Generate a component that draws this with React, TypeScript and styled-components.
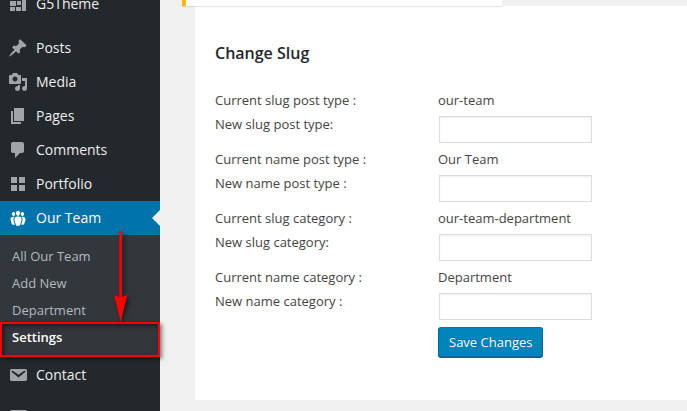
import React from "react";
import styled, { createGlobalStyle } from "styled-components";

const GlobalStyle = createGlobalStyle`
  * { box-sizing: border-box; }
  body {
    margin: 0;
    background: #f0f0f0;
    color: #444;
    font: 13px/24px "Open Sans", "Noto Sans", sans-serif;
  }
`;

const Page = styled.div`
  display: grid;
  grid-template-columns: 160px minmax(0, 1fr);
  height: 100vh;
  overflow: hidden;
`;

const Sidebar = styled.nav`
  background: #23282d;
  min-height: 0;
`;

const Menu = styled.ul`
  list-style: none;
  margin: -13px 0 0;
  padding: 0;
`;

const MenuItem = styled.li<{ $gap?: number }>`
  margin-top: ${(p) => p.$gap ?? 0}px;
`;

const MenuLink = styled.a<{ $active?: boolean }>`
  position: relative;
  display: flex;
  align-items: center;
  gap: 8px;
  height: 34px;
  padding-left: 8px;
  color: ${(p) => (p.$active ? "#fff" : "#eee")};
  background: ${(p) => (p.$active ? "#0073aa" : "transparent")};
  font-size: 14px;
  text-decoration: none;

  &::after {
    content: "";
    display: ${(p) => (p.$active ? "block" : "none")};
    position: absolute;
    right: 0;
    top: 9px;
    border: 8px solid transparent;
    border-right-color: #f0f0f0;
    border-left-width: 0;
  }
`;

const Icon = styled.svg<{ $active?: boolean }>`
  width: 20px;
  height: 20px;
  fill: ${(p) => (p.$active ? "#fff" : "#a0a5aa")};
`;

const Submenu = styled.ul`
  position: relative;
  list-style: none;
  margin: 0;
  padding: 8px 0 7px;
  background: #32373c;
`;

const SubmenuItem = styled.li`
  position: relative;
`;

const SubmenuLink = styled.a<{ $current?: boolean }>`
  display: block;
  padding-left: 12px;
  line-height: 27px;
  color: ${(p) => (p.$current ? "#fff" : "#b4b9be")};
  font-weight: ${(p) => (p.$current ? 600 : 400)};
  text-decoration: none;
`;

const Highlight = styled.span`
  position: absolute;
  inset: -2px 0 -6px;
  border: 2px solid #f00;
  box-shadow: 2px 2px 4px rgba(0, 0, 0, 0.5), inset 2px 2px 4px rgba(0, 0, 0, 0.5);
  pointer-events: none;
`;

const Arrow = styled.svg`
  position: absolute;
  top: -5px;
  left: 110px;
  z-index: 1;
  width: 24px;
  height: 96px;
  filter: drop-shadow(2px 2px 2px rgba(0, 0, 0, 0.5));
  pointer-events: none;
`;

const Main = styled.main`
  display: flex;
  flex-direction: column;
`;

const Notice = styled.div`
  position: relative;
  width: 320px;
  height: 6px;
  margin-left: 22px;
  border-left: 4px solid #ffba00;
  background: #fff;
  box-shadow: 0 1px 1px rgba(0, 0, 0, 0.1);
`;

const Panel = styled.section`
  margin-left: 35px;
  padding: 32px 20px 43px;
  background: #fff;
`;

const Title = styled.h2`
  margin: 0 0 20px;
  color: #23282d;
  font-size: 16px;
  font-weight: 600;
  line-height: 30px;
`;

const Group = styled.div`
  display: grid;
  grid-template-columns: 223px minmax(0, 1fr);
  grid-template-rows: 24px 35px;
`;

const TextInput = styled.input`
  width: 153px;
  height: 27px;
  margin: 4px 0 0 1px;
  padding: 3px 5px;
  border: 1px solid #ddd;
  background: #fff;
  box-shadow: inset 0 1px 2px rgba(0, 0, 0, 0.07);
  color: #32373c;
  font: inherit;
`;

const Actions = styled.div`
  padding: 3px 0 0 223px;
`;

const SaveButton = styled.button`
  display: block;
  height: 30px;
  padding: 0 10px;
  border: 1px solid;
  border-color: #0073aa #006799 #006799;
  border-radius: 3px;
  background: #0085ba;
  box-shadow: 0 1px 0 #006799;
  color: #fff;
  font: inherit;
  line-height: 28px;
  text-shadow: 0 -1px 1px #006799;
`;

const icons = {
  theme:
    "M2 3h11v3H2zM2 7h6v5H2zM9 7h4v4H9zM14 3h4v14h-4zM2 13h5v4H2zM8 13h5v4H8z",
  post: "M10.44 3.02l1.82-1.82 6.36 6.35-1.83 1.82c-1.05-.68-2.48-.57-3.41.36l-.75.75c-.92.93-1.04 2.35-.35 3.41l-1.83 1.82-2.41-2.41-2.8 2.79c-.42.42-3.38 2.71-3.8 2.29s1.86-3.39 2.28-3.81l2.79-2.79L4.1 9.36l1.83-1.82c1.05.69 2.48.57 3.4-.36l.75-.75c.93-.92 1.05-2.35.36-3.41z",
  media:
    "M13 11V4c0-.55-.45-1-1-1h-1.67L9 1H5L3.67 3H2c-.55 0-1 .45-1 1v7c0 .55.45 1 1 1h10c.55 0 1-.45 1-1zM7 4.5c1.38 0 2.5 1.12 2.5 2.5S8.38 9.5 7 9.5 4.5 8.38 4.5 7 5.62 4.5 7 4.5zM14 6h5v10.5c0 1.38-1.12 2.5-2.5 2.5S14 17.88 14 16.5s1.12-2.5 2.5-2.5c.17 0 .34.02.5.05V9h-3V6zm-4 8.05V13h2v3.5c0 1.38-1.12 2.5-2.5 2.5S7 17.88 7 16.5 8.12 14 9.5 14c.17 0 .34.02.5.05z",
  page: "M6 15V2h10v13H6zm-1 1h8v2H3V5h2v11z",
  comments:
    "M5 2h9c1.1 0 2 .9 2 2v7c0 1.1-.9 2-2 2h-2l-5 5v-5H5c-1.1 0-2-.9-2-2V4c0-1.1.9-2 2-2z",
  grid: "M9 9V3H3v6h6zm8 0V3h-6v6h6zm-8 8v-6H3v6h6zm8 0v-6h-6v6h6z",
  groups:
    "M8.03 4.46c-.29 1.28.55 3.46 1.97 3.46 1.41 0 2.25-2.18 1.96-3.46-.22-.98-1.08-1.63-1.96-1.63-.89 0-1.74.65-1.97 1.63zm-4.13.9c-.25 1.08.47 2.93 1.67 2.93s1.92-1.85 1.67-2.93c-.19-.83-.92-1.39-1.67-1.39s-1.48.56-1.67 1.39zm8.86 0c-.25 1.08.47 2.93 1.66 2.93 1.2 0 1.92-1.85 1.67-2.93-.19-.83-.92-1.39-1.67-1.39-.74 0-1.47.56-1.66 1.39zm-.59 11.43l1.25-4.3C14.2 10 12.71 8.47 10 8.47c-2.72 0-4.21 1.53-3.44 4.02l1.26 4.3C8.05 17.51 9 18 10 18c.98 0 1.94-.49 2.17-1.21zm-6.1-7.63c-.49.67-.96 1.83-.42 3.59l1.12 3.79c-.34.2-.77.31-1.2.31-.85 0-1.65-.41-1.85-1.03l-1.07-3.65c-.65-2.11.61-3.4 2.92-3.4.27 0 .54.02.79.06-.1.1-.2.22-.29.33zm8.35-.39c2.31 0 3.58 1.29 2.92 3.4l-1.07 3.65c-.2.62-1 1.03-1.85 1.03-.43 0-.86-.11-1.2-.31l1.11-3.77c.55-1.78.08-2.94-.42-3.61-.08-.11-.18-.23-.28-.33.25-.04.51-.06.79-.06z",
  email:
    "M3.87 4h13.25C18.37 4 19 4.59 19 5.79v8.42c0 1.19-.63 1.79-1.88 1.79H3.87c-1.25 0-1.88-.6-1.88-1.79V5.79c0-1.2.63-1.79 1.88-1.79zm6.62 8.6l6.74-5.53c.24-.2.43-.66.13-1.07-.29-.41-.82-.42-1.17-.17l-5.7 3.86L4.8 5.83c-.35-.25-.88-.24-1.17.17-.3.41-.11.87.13 1.07z",
};

type Entry = { label: string; icon: keyof typeof icons; gap?: number; children?: string[] };

const entries: Entry[] = [
  { label: "G5Theme", icon: "theme" },
  { label: "Posts", icon: "post", gap: 10 },
  { label: "Media", icon: "media" },
  { label: "Pages", icon: "page" },
  { label: "Comments", icon: "comments" },
  { label: "Portfolio", icon: "grid" },
  { label: "Our Team", icon: "groups", children: ["All Our Team", "Add New", "Department", "Settings"] },
  { label: "Contact", icon: "email" },
  { label: "", icon: "email", gap: 7 },
];

const fields = [
  { id: "slug-type", current: "Current slug post type :", value: "our-team", next: "New slug post type:" },
  { id: "name-type", current: "Current name post type :", value: "Our Team", next: "New name post type :" },
  { id: "slug-cat", current: "Current slug category :", value: "our-team-department", next: "New slug category:" },
  { id: "name-cat", current: "Current name category :", value: "Department", next: "New name category :" },
];

export default function App() {
  return (
    <Page>
      <GlobalStyle />
      <Sidebar>
        <Menu>
          {entries.map(({ label, icon, gap, children }, i) => (
            <MenuItem key={i} $gap={gap}>
              <MenuLink href="#" $active={!!children}>
                <Icon viewBox="0 0 20 20" $active={!!children} aria-hidden="true">
                  <path d={icons[icon]} />
                </Icon>
                {label}
              </MenuLink>
              {children && (
                <Submenu>
                  {children.map((name) => (
                    <SubmenuItem key={name}>
                      <SubmenuLink href="#" $current={name === "Settings"}>
                        {name}
                      </SubmenuLink>
                      {name === "Settings" && <Highlight />}
                    </SubmenuItem>
                  ))}
                  <Arrow viewBox="0 0 24 96" aria-hidden="true">
                    <path d="M9.3 1h2.6v66l5.4-2-6.6 27L4.2 65l5.1 2z" fill="#f00" />
                  </Arrow>
                </Submenu>
              )}
            </MenuItem>
          ))}
        </Menu>
      </Sidebar>
      <Main>
        <Notice />
        <Panel>
          <Title>Change Slug</Title>
          <form onSubmit={(e) => e.preventDefault()}>
            {fields.map((f) => (
              <Group key={f.id}>
                <span>{f.current}</span>
                <span>{f.value}</span>
                <label htmlFor={f.id}>{f.next}</label>
                <TextInput id={f.id} type="text" />
              </Group>
            ))}
            <Actions>
              <SaveButton type="submit">Save Changes</SaveButton>
            </Actions>
          </form>
        </Panel>
      </Main>
    </Page>
  );
}
